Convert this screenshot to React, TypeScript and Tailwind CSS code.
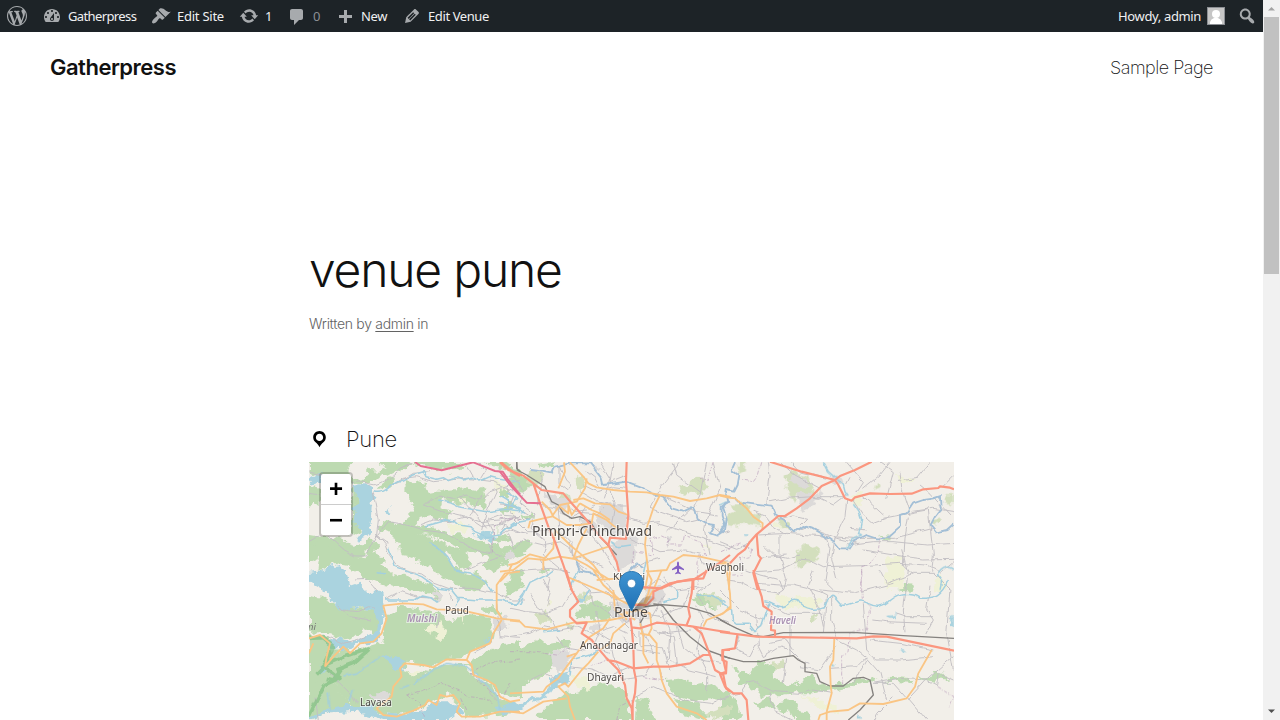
import React from "react";

const icons = {
  wordpress:
    "M20 10c0-5.51-4.49-10-10-10C4.48 0 0 4.49 0 10c0 5.52 4.48 10 10 10 5.51 0 10-4.48 10-10zM7.78 15.37L4.37 6.22c.55-.02 1.17-.08 1.17-.08.5-.06.44-1.13-.06-1.11 0 0-1.45.11-2.37.11-.18 0-.37 0-.58-.01C4.12 2.69 6.87 1.11 10 1.11c2.33 0 4.45.87 6.05 2.34-.68-.11-1.65.39-1.65 1.58 0 .74.45 1.36.9 2.1.35.61.55 1.36.55 2.46 0 1.49-1.4 5-1.4 5l-3.03-8.37c.54-.02.82-.17.82-.17.5-.05.44-1.25-.06-1.22 0 0-1.44.12-2.38.12-.87 0-2.33-.12-2.33-.12-.5-.03-.56 1.2-.06 1.22l.92.08 1.26 3.41zM17.41 10c.24-.64.74-1.87.43-4.25.7 1.29 1.05 2.71 1.05 4.25 0 3.29-1.73 6.24-4.4 7.78.97-2.59 1.94-5.2 2.92-7.78zM6.1 18.09C3.12 16.65 1.11 13.53 1.11 10c0-1.3.23-2.48.72-3.59C3.25 10.3 4.67 14.2 6.1 18.09zm4.03-6.63l2.58 6.98c-.86.29-1.76.45-2.71.45-.79 0-1.57-.11-2.29-.33.81-2.38 1.62-4.74 2.42-7.1z",
  dashboard:
    "M3.76 16h12.48c1.1-1.37 1.76-3.11 1.76-5 0-4.42-3.58-8-8-8s-8 3.58-8 8c0 1.89.66 3.63 1.76 5zM10 4c.55 0 1 .45 1 1s-.45 1-1 1-1-.45-1-1 .45-1 1-1zM6 6c.55 0 1 .45 1 1s-.45 1-1 1-1-.45-1-1 .45-1 1-1zm8 0c.55 0 1 .45 1 1s-.45 1-1 1-1-.45-1-1 .45-1 1-1zm-5.37 5.55L12 7v6c0 1.1-.9 2-2 2s-2-.9-2-2c0-.57.24-1.08.63-1.45zM4 10c.55 0 1 .45 1 1s-.45 1-1 1-1-.45-1-1 .45-1 1-1zm12 0c.55 0 1 .45 1 1s-.45 1-1 1-1-.45-1-1 .45-1 1-1zm-5 3c0-.55-.45-1-1-1s-1 .45-1 1 .45 1 1 1 1-.45 1-1z",
  brush:
    "M14.48 11.06L7.41 3.99l1.5-1.5c.5-.56 2.3-.47 3.51.32 1.21.8 1.43 1.28 2.91 2.1 1.18.64 2.45 1.26 4.45.85zm-.71.71L6.7 4.7 4.93 6.47c-.39.39-.39 1.02 0 1.41l1.06 1.06c.39.39.39 1.03 0 1.42-.6.6-1.43 1.11-2.21 1.69-.35.26-.7.53-1.01.84C1.43 14.23.4 16.08 1.4 17.07c.99 1 2.84-.03 4.18-1.36.31-.31.58-.66.85-1.02.57-.78 1.08-1.61 1.69-2.21.39-.39 1.02-.39 1.41 0l1.06 1.06c.39.39 1.02.39 1.41 0z",
  update:
    "M10.2 3.28c3.53 0 6.43 2.61 6.92 6h2.08l-3.5 4-3.5-4h2.32c-.45-1.97-2.21-3.45-4.32-3.45-1.45 0-2.73.71-3.54 1.78L4.95 5.66C6.23 4.2 8.11 3.28 10.2 3.28zm-.4 13.44c-3.52 0-6.43-2.61-6.92-6H.8l3.5-4c1.17 1.33 2.33 2.67 3.5 4H5.48c.45 1.97 2.21 3.45 4.32 3.45 1.45 0 2.73-.71 3.54-1.78l1.71 1.95c-1.28 1.46-3.15 2.38-5.25 2.38z",
  comment:
    "M5 2h9c1.1 0 2 .9 2 2v7c0 1.1-.9 2-2 2h-2l-5 5v-5H5c-1.1 0-2-.9-2-2V4c0-1.1.9-2 2-2z",
  plus: "M17 9v3h-5v5H9v-5H4V9h5V4h3v5h5z",
  edit: "M13.89 3.39l2.71 2.72c.46.46.42 1.24.03 1.64l-8.01 8.02-5.56 1.16 1.16-5.58s7.6-7.63 7.99-8.03c.39-.39 1.22-.39 1.68.07zm-2.73 2.79l-5.59 5.61 1.11 1.11 5.54-5.65zm-2.97 8.23l5.58-5.6-1.07-1.08-5.59 5.6z",
  search:
    "M12.14 4.18c1.87 1.87 2.11 4.75.72 6.89.12.1.22.21.36.31.2.16.47.36.81.59.34.24.56.39.66.47.42.31.73.57.94.78.32.32.6.65.84 1 .25.35.44.69.59 1.04.14.35.21.68.18 1-.02.32-.14.59-.36.81s-.49.34-.81.36c-.31.02-.65-.04-.99-.19-.35-.14-.7-.34-1.04-.59-.35-.24-.68-.52-1-.84-.21-.21-.47-.52-.77-.93-.1-.13-.25-.35-.47-.66-.22-.32-.4-.57-.56-.78-.16-.2-.29-.35-.44-.5-2.07 1.09-4.69.76-6.44-.98-2.14-2.15-2.14-5.64 0-7.78 2.15-2.15 5.63-2.15 7.78 0zm-1.41 6.36c1.36-1.37 1.36-3.58 0-4.95-1.37-1.37-3.59-1.37-4.95 0-1.37 1.37-1.37 3.58 0 4.95 1.36 1.37 3.58 1.37 4.95 0z",
  location:
    "M10 2C6.69 2 4 4.69 4 8c0 2.02 1.17 3.71 2.53 4.89.43.37 1.18.96 1.85 1.83.74.97 1.41 2.01 1.62 2.71.21-.7.88-1.74 1.62-2.71.67-.87 1.42-1.46 1.85-1.83C14.83 11.71 16 10.02 16 8c0-3.31-2.69-6-6-6zm0 2.56c1.9 0 3.44 1.54 3.44 3.44S11.9 11.44 10 11.44 6.56 9.9 6.56 8 8.1 4.56 10 4.56z",
};

function Icon({ name, className = "size-5" }: { name: keyof typeof icons; className?: string }) {
  return (
    <svg viewBox="0 0 20 20" fill="currentColor" className={`shrink-0 ${className}`}>
      <path d={icons[name]} />
    </svg>
  );
}

type Kind =
  | "forest" | "park" | "field" | "urban" | "lake"
  | "minor" | "border" | "river" | "stream" | "reserve"
  | "rail" | "secondary" | "trunk" | "motorway";

const areas: Partial<Record<Kind, string>> = {
  forest: "#bddab1",
  park: "#d3dfbd",
  field: "#eff1d6",
  urban: "#dcdad9",
  lake: "#aad3df",
};

const lines: Partial<Record<Kind, { color: string; width: number; dash?: string; opacity?: number }>> = {
  minor: { color: "#c2bec3", width: 2.8 },
  border: { color: "#b99dbb", width: 3, dash: "12 5 4 5", opacity: 0.65 },
  stream: { color: "#a2cfdf", width: 4.5 },
  river: { color: "#a3bfd6", width: 5.5 },
  reserve: { color: "#86c286", width: 11, opacity: 0.75 },
  rail: { color: "#85827f", width: 4 },
  secondary: { color: "#fac584", width: 5.5 },
  trunk: { color: "#fb967f", width: 6.5 },
  motorway: { color: "#e66f90", width: 6 },
};

const order: Kind[] = [
  "forest", "park", "field", "urban", "lake", "minor", "border", "stream",
  "river", "reserve", "rail", "secondary", "trunk", "motorway",
];

const roughness: Partial<Record<Kind, string>> = {
  forest: "url(#rough)",
  park: "url(#rough)",
  field: "url(#rough)",
  urban: "url(#rough)",
  lake: "url(#rough)",
  minor: "url(#wavy)",
  border: "url(#wavy)",
  stream: "url(#wavy)",
  river: "url(#wavy)",
  reserve: "url(#wavy)",
};

// Every sheet is drawn at three times the size it has on the map.
const sheets: { x: number; y: number; d: Partial<Record<Kind, string[]>> }[] = [
  {
    x: 300, y: 420,
    d: {
      forest: [
        "M27 110H165L145 150 160 178 190 175 207 150 238 152 260 140 232 126H335L300 150 262 170 235 162 205 190 160 188 62 180 45 165 27 160Z",
        "M27 195 62 205V260L40 250 27 268Z",
        "M335 126H480L500 140 470 150 430 152 390 148Z M555 126H620L640 140 610 148 580 140Z M625 145 660 150V182L640 172Z",
        "M312 185 345 180 378 190 372 205 395 218 440 210 500 205 520 212 545 200 562 228 552 262 525 260 505 245 480 255 450 240 425 238 415 265 440 268 458 275 445 298 415 300 390 285 365 292 345 315 400 325 440 335 490 350 550 365 600 380 630 378 660 372 660 400 600 402 550 404 500 392 450 372 400 350 350 340 300 340 275 350 290 330 245 340 230 330 250 300 290 310 330 290 340 255 318 225 320 205Z",
        "M570 350 625 345 620 360 590 365Z M600 270 635 240 650 260 615 285Z",
        "M27 345 60 350 95 350 130 360 160 380 195 375 205 350 225 360 215 385 190 410 150 412 110 395 70 390 27 385Z",
        "M160 190 175 215 165 280 175 330 155 345 157 200Z",
        "M255 210 275 195 285 180 270 175 240 200Z",
      ],
      field: ["M580 185 620 190 612 215 585 208Z M440 310 480 305 515 318 500 335 460 340 445 325Z M480 235 495 235 492 250Z"],
      lake: [
        "M157 195 180 190 215 205 220 235 215 260 213 300 205 345 190 350 182 365 170 350 178 330 160 305 165 280 157 265 172 240Z",
        "M27 180 62 160V185L35 195Z M250 265 265 262 272 278 260 280Z M520 345 555 335 590 345 575 360 540 355Z",
      ],
      minor: [
        "M157 190C195 175 210 205 240 190L270 175 300 148 340 128 M220 220 235 300 230 345 265 370",
        "M270 200 310 175 350 170 400 185 450 180 500 175 540 180 580 185 610 200 660 220",
        "M290 190 340 160 390 155 M380 250 420 225 460 235 500 225 545 240 570 215 640 190 660 180",
        "M395 235 370 255 425 275 490 290 540 305 600 300 660 290 M360 315 400 300 450 305 500 290 545 320 600 310 660 335",
        "M230 350 265 305 320 315 370 330 440 340 480 365 540 395 580 402 M575 400 580 340 560 300 600 285 660 290",
        "M480 230 525 280 560 325 M545 225 510 290 M590 210 560 275 545 330 M85 350 130 390 165 408 200 408 232 345 M160 188 100 175 27 155 M27 365 60 345 M530 126 560 150 545 175 M500 135 520 170",
        "M27 220 60 225 M620 200 640 230 625 270 660 300",
      ],
      border: ["M580 400V315L650 292"],
      stream: [
        "M220 215C255 225 270 195 290 185 320 190 325 165 345 163L370 155 378 170 410 178 430 173 445 182 470 172 490 180 515 172 540 183 570 170 600 178 660 190",
        "M415 240 450 248 475 260 515 268 560 275 620 268 660 272 M375 318 405 310 440 300 460 302 475 315 510 320 525 335 560 350 600 345 620 325 660 305",
        "M620 215 650 235 635 255 660 265",
      ],
      rail: ["M650 126V145L660 155"],
      secondary: ["M660 425 635 435 628 450"],
      trunk: ["M603 126 625 145 645 160 660 168"],
      motorway: ["M345 126 362 138 425 151 520 127 560 143 585 153 608 155 625 180 640 200 660 224"],
    },
  },
  {
    x: 305, y: 520,
    d: {
      forest: [
        "M255 25 300 25 340 40 400 60 450 90 480 80 500 115 495 140 460 145 440 105 400 85 370 65 420 95 430 120 470 155 530 165 540 200 520 215 470 205 430 180 380 150 340 130 320 110 290 105 285 75 265 50Z",
        "M0 75 50 65 80 80 110 90 150 110 185 115 205 60 220 75 205 100 235 115 250 130 225 135 260 160 300 165 350 185 390 200 410 235 390 240 350 215 290 205 240 195 200 180 170 170 130 135 100 130 70 140 40 155 45 110 0 130Z",
        "M580 0 575 80 540 100 550 120 530 140 560 150 600 128 660 105V85L610 95 580 75Z M595 195 640 190 650 205 610 230Z M480 60 500 70 495 90Z",
      ],
      lake: [
        "M0 160 40 155 60 150 75 140 105 135 125 160 135 195 165 185 180 215 235 215 240 262 200 268 160 262 110 275 90 245 65 220 45 205 0 180Z",
      ],
      urban: ["M600 95 625 95 625 120 600 125Z M390 210 410 230 400 240 380 225Z"],
      minor: [
        "M218 45 240 70 250 100 275 135 300 150 350 162 390 190 430 205 500 205 570 218 620 240 660 240 M240 240 290 215 340 232 400 235 M430 205 440 240 M150 180 185 178 205 200 215 215",
        "M110 270 160 275 190 260 210 265 M480 150 530 130 590 110 M550 70 570 100 600 115 M590 30 610 0 M610 40 630 90 650 60",
      ],
      stream: [
        "M370 68 400 80 425 110 450 150 500 160 540 185 560 215 M250 80 262 110 270 140 310 155 350 170 400 205 440 210 460 235 520 240 590 240 630 255 660 215 M240 240 330 240 350 228 380 235 400 250 M215 155 240 158 M450 255 465 235",
      ],
    },
  },
  {
    x: 500, y: 455,
    d: {
      forest: [
        "M20 70 75 65 105 90 70 110 45 105Z M110 30 165 22 160 35 125 40Z M0 90 30 110 20 130 0 128Z",
        "M0 285 40 275 50 260 85 250 95 270 75 290 40 310 20 330 0 325Z M30 350 60 338 75 360 50 375 25 390Z M70 185 105 180 100 190 60 200Z",
      ],
      park: ["M75 65 105 45 130 55 128 85 110 100 80 85Z M535 90 560 95 570 75 600 65 615 80 620 100 605 115 580 108 565 125 540 110Z M180 115 210 120 215 140 180 135Z M230 70 250 60 250 100 235 105Z"],
      field: ["M370 290 385 285 375 300 355 300Z M20 160 50 175 40 190Z M610 280 625 270 625 285Z"],
      urban: ["M300 150 355 145 385 180 380 245 310 230 285 190Z M325 265 405 245 410 290 390 330 355 345Z M130 110 190 125 210 155 195 180 150 150Z M240 190 300 205 290 225 235 215Z M285 30 310 40 290 50Z M500 240 520 250 505 270Z"],
      minor: [
        "M0 60 45 65 70 110 60 145 105 180 90 220 140 260 130 300 190 350 M125 55 115 150 175 160 180 230 215 265 220 310 250 350",
        "M0 150 45 155 100 190 M180 30 200 75 215 90 205 105 180 85Z M250 90 290 110 340 95 380 100 M340 22 330 80 380 60 M240 110 290 140 345 150 380 150",
        "M300 20 330 70 310 130 M200 150 225 170 260 165 285 150 M210 190 245 175 290 180 315 160 M330 110 345 140 330 240 M260 50 285 70 300 100",
        "M540 22 480 100 450 160 M620 22 600 120 585 150 500 230 M640 25 660 100 620 190 615 220 630 300 M480 120 590 170 650 180 M470 205 520 220 580 240 690 280",
        "M385 190 430 205 480 200 M390 250 435 270 480 290 560 285 600 295 M400 340 435 320 480 310 M215 300 250 310 310 335 M20 355 75 345 150 340 210 350 M0 210 40 190 80 230 150 230",
        "M205 260 225 320 260 345 M70 255 130 270 180 260 210 280 M260 225 300 270 350 350 M450 160 560 200 600 190 M520 22 530 60 600 110 M640 210 670 235 690 230 M600 300 610 330 690 320",
        "M0 240 30 225 80 235 M120 310 150 370 140 405 M260 150 240 200 270 240",
      ],
      border: ["M400 325 400 290 460 300 450 250 485 240 505 250 500 270 545 270 550 240 600 260 620 300 595 300 590 405 M640 20 620 80 600 70 M0 190 100 195"],
      stream: ["M0 145 45 155 75 175 M0 235 40 205 90 195 M20 160 25 135 0 120 M210 405 235 345 M430 360 440 310 M330 260 355 275 390 270"],
      river: [
        "M90 45 130 50 155 55 165 35 210 25 270 25 305 70 310 90 380 80 420 95 460 115 490 125 515 160 550 170 580 155 590 190 615 205 645 210 630 235 650 242 675 225 680 190 670 160 675 145 690 140",
        "M225 310 240 350 300 360 M390 345 410 325 430 340",
      ],
      rail: ["M50 20 52 45 80 60 135 95 155 140 175 150 190 175 215 190 240 185 270 200 300 245 350 300"],
      secondary: [
        "M210 22 250 65 265 85 290 97 340 105 390 110 440 112 480 120 520 125 570 138 620 130 660 120 690 125",
        "M192 22 195 50 175 100 M260 70 255 100 230 140 180 150 155 185 130 190 90 200 85 220 M125 140 150 165 160 185 200 210 240 210 275 205 280 175 320 195 350 220",
        "M220 135 250 130 285 145 330 148 355 170 385 180 M240 145 275 165 300 175 330 195 M480 120 460 160 440 220 435 270 445 350 435 405",
        "M165 225 210 270 240 295 280 330 310 370 M260 220 235 270 220 310 250 300 325 275 M0 350 40 345 85 310 135 315 180 305 225 312 260 330 290 350 330 375",
        "M25 330 50 325 90 298 135 310 M130 345 130 315 160 280 165 225 M0 380 30 350 M290 375 360 370 M440 350 500 345 510 325 550 300 600 305 690 325",
        "M180 155 205 175 205 150 215 180 240 145",
      ],
      trunk: [
        "M0 22 25 45 70 62 100 85 125 105 190 115 215 145 260 195 300 245 325 270 350 320 357 350 M100 85 120 145 145 215 165 260 190 330 215 405",
        "M380 20 378 80 385 180 378 252 330 248 325 270 M400 395 485 400 530 380 580 375 610 355 650 330 690 300 M580 375V405",
      ],
      motorway: ["M0 50 30 90 80 143 122 145"],
    },
  },
  {
    x: 720, y: 455,
    d: {
      park: [
        "M200 55 225 45 240 60 265 70 285 100 270 115 235 115 220 140 200 100Z M20 185 45 175 35 150 65 145 90 170 125 190 120 215 80 205 50 215 25 210Z",
        "M235 280 265 268 295 280 298 315 270 320 245 335 228 325Z M465 80 480 100 460 110Z M670 120 702 120V145L675 135Z M640 195 665 190 660 210 640 210Z M55 22H75V45L58 55Z M170 180 210 200 205 230 180 210Z",
      ],
      forest: ["M475 245 510 238 512 252 480 252Z M525 390 570 385 585 405H530Z"],
      field: ["M498 310 545 305 550 405H500Z M390 120 425 110 425 150 400 150Z M165 205 185 215 185 225 165 220Z M525 60 585 70 570 85 530 75Z M665 360 645 400 680 405Z"],
      urban: ["M240 110 275 115 300 105 310 130 275 140 278 155 250 165 235 150Z M205 75 230 60 260 75 270 95 240 90Z M335 65 350 60 365 90 345 90Z"],
      minor: [
        "M145 22 150 60 140 150 M180 22 225 60 300 100 M215 22 240 50 320 70 M150 140 200 130 280 125 380 125",
        "M100 165 135 180 160 215 200 240 260 215 350 250 415 265 M115 240 200 235 300 242 400 250 520 250 640 220 M130 270 160 300 200 310 240 300 M105 350 180 345 240 315 280 320 310 335 430 332 540 325 620 330 660 350",
        "M315 240 330 280 315 380 340 405 M345 250 335 310 350 370 M380 135 375 185 345 250 M400 135 430 180 460 205 500 190 M390 220 440 225 M390 70 380 90 M425 120 490 180 M510 22 480 60 430 100",
        "M540 50 545 100 570 180 M630 22 590 70 530 80 M600 90 625 110 690 180 M620 165 540 180 490 190 M625 165 640 300 635 350 M565 185 555 250 550 330 580 360 M430 285 520 300 610 312 702 310",
        "M380 120 340 150 300 130 270 125 M380 22 430 80 410 110 M575 170 640 160 702 170 M545 280 560 340 M660 355 702 320 M170 195 220 180 260 190 240 210",
        "M380 270 460 260 520 260 620 270 702 265 M0 260 50 280 100 260 M120 310 200 300 M480 22 520 50 500 130 M700 60 660 100 M180 240 180 300 200 370 190 405",
      ],
      border: ["M125 22 115 60 100 80 65 75 M0 290 55 265 95 280 90 305 60 310 70 360 20 360 M480 245 475 290 440 330 425 335V405"],
      stream: [
        "M310 22 325 50 370 90 375 110 385 125 M400 145 415 165 425 195 420 220 415 235 425 240 395 255 380 280",
        "M652 360C665 330 690 330 702 340 M652 360 665 380 660 405 M70 240H85 M0 150 20 140",
      ],
      river: [
        "M45 22 35 45 55 60 50 90 40 110 20 105 18 125 45 128 60 143 100 148 155 155 165 180 190 195 205 215 225 232 250 213 275 220 310 240 345 265 360 283 385 283 400 260 440 240 470 250 500 250 520 232 540 215 540 180 560 175 580 145 610 135 640 130 663 123 665 160 645 185 632 210 650 232 680 225 702 205",
        "M20 120 25 140 5 155 5 180 15 210 0 235",
      ],
      secondary: ["M0 122 25 128 45 130 80 160 100 185 128 205 127 225 M0 325 30 330 27 405"],
      trunk: [
        "M150 20 245 50 345 75 360 63 405 45 455 20 M345 75 305 93 270 130 230 160 195 183 175 183 110 238 90 260 75 283 55 298 30 325",
        "M345 75 355 90 375 130 395 137 405 127 450 115 510 117 575 116 610 103 655 99 660 94 690 98 702 103 M110 238 115 300 123 310 100 355 113 405",
      ],
    },
  },
  {
    x: 300, y: 570,
    d: {
      forest: [
        "M27 75 70 80 115 105 145 115 200 115 240 120 240 175 215 195 190 175 155 205 120 210 80 185 27 190Z",
        "M27 195 85 200 95 250 130 230 160 245 200 230 250 215 260 130 300 110 360 115 420 135 440 150 500 135 570 140 580 180 575 210 545 235 490 260 430 270 390 290 320 275 305 300 370 310 430 285 490 285 530 330 580 350 600 390 660 400V425L590 435 500 440 475 400 440 370 410 390 370 410 330 430 275 435 210 415 190 405 175 420 130 380 90 330 27 370Z",
        "M27 340 90 330 150 400 165 415 120 420 27 450Z",
        "M490 280 530 265 590 235 660 210V380L600 370 560 335 520 305Z M540 110 580 105 600 125 580 135 545 125Z",
      ],
      field: ["M370 180 420 155 440 190 430 205 395 190Z M480 130 495 125 480 165Z M320 305 360 300 350 325Z"],
      urban: ["M210 370 255 370 270 395 225 390Z M585 145 620 140 625 180 585 180Z M390 65 405 75 395 90Z"],
      lake: [
        "M210 80 250 80 255 135 240 180 235 215 205 220 180 218 150 230 115 235 80 225 95 208 150 212 205 200 225 180 230 140 210 115Z",
        "M240 260 270 258 310 280 310 300 285 300 265 275Z M140 405 200 405 250 430 310 435 370 420 420 400 470 400 490 430 440 450H250L170 425 90 430 27 450V440L90 415Z M590 415 660 395V425L600 430Z M555 210 575 200 565 218Z",
        "M55 290 75 285 80 300 60 305Z",
      ],
      minor: [
        "M590 100 600 200 660 205",
        "M75 290 110 330 160 380 170 400 M415 135 410 175 M510 310 550 335 590 395 M110 105 150 140 210 150 M580 215 520 245 M45 380 55 450",
        "M80 200 130 220 200 200",
      ],
      border: ["M320 375 370 360 425 340 480 360 505 380 560 385 580 405 M320 375 360 400 370 440 M485 385 500 420 M525 300 560 280 660 270 M510 310 560 355 600 380 M630 340 600 390"],
      stream: [
        "M130 318 175 308 240 260 M340 340 400 300 440 280 500 290 540 325 590 370 600 420 M300 355 325 345",
        "M85 370 90 420 M160 360 150 390",
      ],
      reserve: ["M27 205 70 203 100 230 75 285 50 310 M75 285 120 265 210 235 M120 300 100 330 80 325 M210 235 160 280 110 300 M75 345 50 390 27 440 M75 290 120 325 75 345"],
      secondary: [
        "M256 130 250 107 310 100 370 103 410 118 480 120 540 133 590 145 660 152 M256 130 260 145 245 190 220 215 180 220 150 250 130 230 100 260 75 290 M75 290 80 260 90 220 60 195 27 205",
        "M605 145 590 120 590 45 615 10 660 5 M605 150 580 190 570 220 510 245 500 270 440 268 400 292 370 285 315 280 300 295 305 320 280 350 275 380 230 415 250 435 290 440 340 422 375 405 385 390 410 405 420 375 440 380 460 375 480 400 470 425 485 440 540 440 600 425 660 425",
        "M500 270 515 285 520 315 560 330 585 345 600 380 630 395 660 390 M40 220 27 250",
      ],
    },
  },
  {
    x: 510, y: 570,
    d: {
      forest: [
        "M0 215 40 230 80 208 110 220 160 210 185 210 180 235 135 245 125 300 100 320 60 330 0 370Z M80 440 120 400 160 370 200 365 250 345 310 340 350 370 355 420 370 450H85Z M380 380 415 385 420 420 440 450H375Z",
        "M215 115 260 95 300 110 305 145 260 150 220 140 200 150 190 120Z M470 330 520 325 560 345 600 340 660 370V400L600 385 560 395 500 380 480 360Z M0 25 25 20 40 45 0 65Z M85 0H110V10Z M540 80 590 65 640 110 600 115 560 100Z M490 390 560 400 600 440 580 450 510 430Z",
      ],
      park: ["M75 130 110 120 120 155 85 155Z M215 70 240 85 235 105 205 90Z M585 70 610 65 630 85 640 110 600 110Z M590 430 660 405V430L610 450Z M170 150 200 170 175 185Z"],
      field: ["M185 310 230 325 240 360 200 350Z M110 80 130 95 115 120Z"],
      urban: ["M120 245 185 240 180 280 150 310 125 285Z M300 95 350 95 430 115 410 145 330 155 300 130Z M405 50 460 55 460 100 410 95Z M240 165 275 160 270 185 240 185Z"],
      lake: ["M120 325 165 308 183 320 180 335 135 350 115 380 60 400 20 422 0 430V408L60 390 110 370 125 345Z M210 85 225 90 215 105 205 102Z"],
      minor: [
        "M0 115 50 125 100 130 160 110 190 60 M0 200 60 190 100 170 150 180 200 170 250 190 310 170 350 190 M60 70 80 110 120 140 140 180 M100 30 120 70 110 110 M200 30 240 60 250 100 310 140 360 130",
        "M225 70 290 65 310 90 360 80 380 130 340 160 380 200 M250 180 300 210 310 260 340 310 M260 120 270 180 250 230 300 250 M390 180 390 230 460 230 480 300 M430 180 490 200 500 290 M450 120 480 180 475 270 M560 110 580 150 560 240 590 300 590 370",
        "M600 40 560 70 600 140 660 160 M400 130 450 140 520 110 540 60 M180 290 250 300 290 320 360 290 M330 330 400 320 430 280 M500 165 520 230 570 270 630 280 M460 20 500 60 580 50 M340 200 380 240 450 250 M60 330 100 310 170 340 M140 200 160 230 220 240",
        "M370 380 430 350 520 390 600 400 660 380 M480 270 540 300 620 320 M270 20 300 50 330 110 M385 120 400 190 430 250 M310 120 420 125 M310 105 350 160 M460 80 420 150 M540 180 450 190 M390 60 450 30 490 50",
      ],
      border: ["M0 245 60 245 140 255 180 230 M240 290 290 265 330 290 M320 450 330 410 370 390 M400 320 460 330 450 300 M190 180 170 160"],
      stream: ["M0 103 30 100 45 70 60 40 110 15 130 0 M180 320 185 270 240 255 275 240 M220 90 240 60 M560 75 600 75 650 100 M460 95 500 85 500 60 M100 185 150 180"],
      rail: ["M400 110 450 105 460 110 490 150 540 200 590 240 660 265 M430 102 530 110 600 130 660 165 M410 125 390 160"],
      secondary: [
        "M170 20 230 45 300 75 350 100 370 110 M250 0 280 45 330 90 360 105 M410 0 425 30 415 70 400 105 M455 0 430 60 400 110 M0 152 30 155 45 170 110 178 190 158 250 155 300 150 350 140",
        "M200 250 170 290 145 325 110 350 100 365 0 370 M265 245 235 280 215 300 175 350 165 340 145 350 175 380 180 410 195 450 M0 425 40 430 100 395 170 385",
        "M300 145 280 175 240 200 215 230 200 250 170 260 M345 160 310 190 300 220 270 240 M350 150 340 130 385 120 420 130 425 175 415 195 390 190 M390 160 400 200 400 250 415 280 M415 190 440 220 440 270 450 300 455 330 470 370 500 410 560 430 590 450",
        "M310 60 315 120 345 140 M340 120 375 150 M420 130 400 130 M580 170 590 150 640 130 660 110 M360 105 400 100",
      ],
      trunk: [
        "M168 0 185 60 205 95 180 120 180 140 200 160 230 158 215 190 245 210 260 230 290 265 325 300 345 345 350 385 365 415 368 450 M290 270 320 275 370 295 430 290 480 290 540 280 580 255 600 255 M600 255 575 190 550 170 520 165 440 158 420 165 390 175 365 172 370 230 372 300 378 330 375 370 368 400 368 450 M365 172 360 140 M360 105 410 105 430 85 430 65 480 40 540 28 580 25 590 0 M548 28 545 70 535 115 540 140 530 165 M550 170 610 180 660 188 M600 255 615 300 640 315 648 355 660 365 M660 240 637 240 637 270 650 275 648 310 635 310",
      ],
    },
  },
  {
    x: 720, y: 570,
    d: {
      forest: [
        "M50 315 90 300 120 275 165 290 160 320 185 335 235 345 250 325 280 320 295 345 390 335 440 320 470 330 440 340 370 355 280 370 220 370 180 375 130 380 90 350 60 340Z M0 370 50 385 60 430 55 450H0Z M105 395 150 385 165 410 120 415Z M165 400 215 390 230 420 265 430 280 450H220L210 420 190 440Z M35 290 60 290 65 305 45 305Z",
        "M525 50 560 40 585 48 580 65 540 62Z M590 325 630 320 640 300 670 305 690 330 660 325 640 335Z M500 320 580 325 575 338 500 335Z",
      ],
      park: ["M150 280 190 270 200 290 165 300Z M270 145 290 140 290 155 275 160Z"],
      field: ["M500 0H550L555 30 540 50 510 30Z M170 75 215 85 245 75 290 80 305 95 280 120 220 110 190 115 165 95Z M240 370 290 390 350 400 350 430 310 420Z M635 40 660 20 670 60 640 75Z"],
      lake: ["M692 145 702 140V173H692Z M508 135 528 130 530 150 520 140 512 148Z M335 282H343V290H335Z M540 240H553V246H540Z M418 430H428V440H418Z"],
      minor: [
        "M20 30 60 35 110 60 180 70 M110 40 180 45 220 45 300 65 320 75 310 190 M80 0 120 15 180 30 190 60 175 70 M335 75 335 150 350 200 M280 0 265 50 300 120 310 170 M430 100 440 240 470 270 540 270 640 260",
        "M110 130 115 230 130 260 180 230 210 240 240 270 265 280 M210 140 210 260 M140 100 200 130 310 130 M300 60 400 70 520 40 M460 150 500 155 620 160 M565 0 550 120 555 190 M630 50 620 120 640 150 620 190 M480 0 500 40 580 10 640 10 690 60 680 190 700 300",
        "M340 205 410 240 440 265 480 310 500 390 M350 230 300 300 240 290 M530 130 560 140 640 140 M450 210 540 220 640 240 M330 295 410 290 440 260 M560 385 520 340 460 340 M565 390 620 330 700 260 M565 385 620 450 M520 380 470 430 460 450 M440 270 400 340 M0 60 60 120 130 150 M60 200 50 240 90 260 110 220 M150 220 200 210 220 240 M200 265 190 340",
        "M0 385 60 370 80 340 100 335 160 365 240 370 280 360 340 370 M150 370 160 420 220 450 M460 340 540 325 620 330 650 345 655 310 700 330",
      ],
      border: ["M425 0 430 90 450 110 440 180 390 190 380 250 365 260 V340 M650 350 702 380 690 415"],
      stream: ["M0 95 35 120 37 150 50 160 85 160 105 185 125 170 140 125 150 100 M133 93C155 90 165 110 185 110 210 110 210 80 235 90 255 125 295 120 315 112 335 60 335 70 365 105 395 110 420 80 440 100 470 115 490 110 510 90 545 60 590 70 600 85 645 85 665 75 685 30 650 25 652 0"],
      rail: ["M0 150 50 175 100 197 130 200 190 188 400 187 550 197 702 205 M0 257 70 275 120 275 160 265 220 257 235 270 255 280 255 305 290 310 300 335 330 348 370 348 400 325 430 322 450 330 460 375 420 420 385 450"],
      secondary: ["M20 0 30 70 32 115 0 135 M343 205 340 270 330 290 332 345 335 370 320 425 M295 450 300 435 330 425 385 420 420 400 490 402 560 385 585 350 595 310 635 240 M320 425 320 450"],
      trunk: ["M0 186 110 200 230 202 410 205 460 199 500 200 702 242 M100 0 110 35 125 80 130 108 155 125 153 180 165 182 165 200 M52 195 45 235 10 240 8 260 18 305 0 312 15 350 40 370 65 370 80 390 85 450"],
    },
  },
];

const labels: { text: string; x: number; y: number; size: number; width: number; italic?: boolean }[] = [
  { text: "Pimpri-Chinchwad", x: 532, y: 535.5, size: 13.5, width: 120 },
  { text: "Wagholi", x: 706, y: 570.5, size: 10, width: 38 },
  { text: "Paud", x: 445, y: 613.5, size: 10.5, width: 24 },
  { text: "Pune", x: 614, y: 616.5, size: 14, width: 34 },
  { text: "Anandnagar", x: 580, y: 649, size: 10, width: 58 },
  { text: "Dhayari", x: 587, y: 680.5, size: 10, width: 37 },
  { text: "Lavasa", x: 360, y: 705.5, size: 10.5, width: 32 },
  { text: "Khadki", x: 613, y: 580, size: 9.5, width: 32 },
  { text: "Mulshi", x: 407, y: 621.5, size: 10, width: 30, italic: true },
  { text: "Haveli", x: 769, y: 623.5, size: 10, width: 27, italic: true },
];

function MapCanvas() {
  return (
    <svg viewBox="309 462 645 258" className="block h-[258px] w-[645px] bg-[#f2efe9]">
      <defs>
        <filter id="rough" filterUnits="userSpaceOnUse" x="300" y="450" width="665" height="280">
          <feTurbulence type="fractalNoise" baseFrequency="0.11" numOctaves="3" seed="4" />
          <feDisplacementMap in="SourceGraphic" scale="11" xChannelSelector="R" yChannelSelector="G" />
        </filter>
        <filter id="wavy" filterUnits="userSpaceOnUse" x="300" y="450" width="665" height="280">
          <feTurbulence type="fractalNoise" baseFrequency="0.09" numOctaves="2" seed="9" />
          <feDisplacementMap in="SourceGraphic" scale="5" xChannelSelector="R" yChannelSelector="G" />
        </filter>
      </defs>
      {order.map((kind) => (
        <g key={kind} filter={roughness[kind]}>
          {sheets.map((s, i) => (
            <g key={i} transform={`translate(${s.x} ${s.y}) scale(.33333)`}>
              {(s.d[kind] ?? []).map((d, j) => {
                const line = lines[kind];
                if (!line) return <path key={j} d={d} fill={areas[kind]} />;
                return (
                  <path
                    key={j}
                    d={d}
                    fill="none"
                    stroke={line.color}
                    strokeWidth={line.width}
                    strokeDasharray={line.dash}
                    opacity={line.opacity}
                    strokeLinejoin="round"
                  />
                );
              })}
            </g>
          ))}
        </g>
      ))}
      <path
        d="M678 561.5q1 0 1 2v2l5 3.5v1.300l-5-1.500v3l1.800 1.500v.9l-2.800-.6-2.800.6v-.9l1.800-1.500v-3l-5 1.500v-1.300l5-3.500v-2q0-2 1-2z"
        fill="#8461c4"
      />
      {labels.map((l) => (
        <text
          key={l.text}
          x={l.x}
          y={l.y}
          fontSize={l.size}
          textLength={l.width}
          lengthAdjust="spacingAndGlyphs"
          fontStyle={l.italic ? "italic" : undefined}
          fontWeight={l.italic ? 600 : 400}
          fill={l.italic ? "#ab92b4" : "#4d4946"}
          stroke="#fff"
          strokeOpacity={0.55}
          strokeWidth={2}
          paintOrder="stroke"
          fontFamily="'Noto Sans', sans-serif"
        >
          {l.text}
        </text>
      ))}
      <text x="308" y="629.5" fontSize="9.5" fontStyle="italic" fill="#777" fontFamily="'Noto Sans', sans-serif">ni</text>
    </svg>
  );
}

function Marker() {
  return (
    <svg viewBox="0 0 41 41" className="absolute left-[310px] top-[109px] h-[41px] w-[41px]">
      <defs>
        <linearGradient id="pin" x1="0" y1="0" x2="0" y2="1">
          <stop offset="0" stopColor="#3f94d2" />
          <stop offset="1" stopColor="#1f70b4" />
        </linearGradient>
        <linearGradient id="shade" x1="0" y1="0" x2="1" y2="0">
          <stop offset="0" stopColor="#000" stopOpacity=".45" />
          <stop offset="1" stopColor="#000" stopOpacity="0" />
        </linearGradient>
      </defs>
      <path d="M12.500 41 24 27Q32 23 37 27 41 31 34 35Z" fill="url(#shade)" />
      <path
        d="M12.500 .5C5.600 .5 .5 5.800 .5 12.300c0 3.500 1.500 6.600 3.200 9.500L12.500 40l8.800-18.200c1.700-2.900 3.200-6 3.200-9.500C24.500 5.800 19.400 .5 12.500 .5z"
        fill="url(#pin)"
        stroke="#2b78b3"
      />
      <circle cx="12.500" cy="12.500" r="4.200" fill="#fff" stroke="#3374a8" strokeWidth=".6" />
    </svg>
  );
}

function AdminBar() {
  return (
    <header className="flex h-8 items-center bg-[#1d2327] font-['Noto_Sans',sans-serif] text-[13px] leading-8 text-[#f0f0f1]">
      <div className="flex w-[42px] justify-start pl-[7px] text-[#a7aaad]">
        <Icon name="wordpress" />
      </div>
      <div className="flex w-[109px] items-center gap-[6px]">
        <Icon name="dashboard" className="size-5 text-[#a7aaad]" />
        <span className="tracking-[-0.62px]">Gatherpress</span>
      </div>
      <div className="flex w-[88px] items-center gap-[6px]">
        <Icon name="brush" className="size-5 text-[#a7aaad]" />
        <span className="tracking-[-0.25px]">Edit Site</span>
      </div>
      <div className="flex w-[48px] items-center gap-[6px]">
        <Icon name="update" className="size-5 text-[#a7aaad]" />
        <span>1</span>
      </div>
      <div className="flex w-[48px] items-center gap-[6px]">
        <Icon name="comment" className="size-5 translate-y-px text-[#a7aaad]" />
        <span className="text-[#8c8f94]">0</span>
      </div>
      <div className="flex w-[67px] items-center gap-[6px]">
        <Icon name="plus" className="size-5 text-[#a7aaad]" />
        <span className="tracking-[-0.3px]">New</span>
      </div>
      <div className="flex items-center gap-[6px]">
        <Icon name="edit" className="size-5 text-[#a7aaad]" />
        <span className="tracking-[-0.4px]">Edit Venue</span>
      </div>
      <div className="ml-auto flex items-center">
        <span className="tracking-[-0.36px]">Howdy, admin</span>
        <svg viewBox="0 0 18 18" className="ml-[6px] size-[18px]">
          <path fill="#8c8f94" d="M0 0h18v18H0z" />
          <path fill="#c6c6c6" d="M1 1h16v16H1z" />
          <circle cx="9" cy="7" r="4" fill="#fff" />
          <path fill="#fff" d="M3 17v-2q1-3 4-4h4q3 1 4 4v2z" />
        </svg>
        <Icon name="search" className="ml-[12px] mr-[6px] size-5 text-[#a7aaad]" />
      </div>
    </header>
  );
}

function Scrollbar() {
  return (
    <div className="flex h-full w-[17px] flex-col items-center bg-[#f1f1f1]">
      <svg viewBox="0 0 17 17" className="size-[17px] shrink-0">
        <path d="M5 10.500 8.500 7l3.500 3.500z" fill="#a3a3a3" />
      </svg>
      <div className="h-[257px] w-[15px] bg-[#c1c1c1]" />
      <svg viewBox="0 0 17 17" className="mt-auto size-[17px] shrink-0">
        <path d="M5 6.500 8.500 10l3.500-3.500z" fill="#505050" />
      </svg>
    </div>
  );
}

export default function App() {
  return (
    <div className="flex h-[720px] w-[1280px] overflow-hidden bg-white font-['Inter',sans-serif] text-[#111]">
      <div className="min-w-0 flex-1">
        <AdminBar />
        <nav className="flex h-[70px] items-center justify-between px-[50px]">
          <a className="text-[22px] font-semibold tracking-[-0.5px]">Gatherpress</a>
          <a className="text-[18px] font-extralight tracking-[-0.5px]">Sample Page</a>
        </nav>
        <main className="mx-auto w-[645px] pt-[138px]">
          <h1 className="h-[60px] whitespace-nowrap text-[48px] font-light leading-[60px] tracking-[-1.2px]">venue pune</h1>
          <p className="mt-[14px] h-5 text-[14px] font-light leading-5 tracking-[-0.3px] text-[#636363]">
            Written by <a className="underline underline-offset-2">admin</a> in
          </p>
          <div className="mt-[87px] mb-1 flex h-[37px] items-center gap-[16px]">
            <Icon name="location" className="size-[21px] text-black" />
            <span className="text-[22px] font-extralight tracking-[-0.3px]">Pune</span>
          </div>
          <div className="relative h-[258px]">
            <MapCanvas />
            <Marker />
            <div className="absolute left-[10px] top-[10px] w-[34px] overflow-hidden rounded border-2 border-black/20 bg-white bg-clip-padding text-center font-['Liberation_Sans',sans-serif] text-[24px] font-bold leading-[30px] text-black">
              <div className="h-[31px] border-b border-[#ccc]">+</div>
              <div className="h-[30px]">−</div>
            </div>
          </div>
        </main>
      </div>
      <Scrollbar />
    </div>
  );
}
